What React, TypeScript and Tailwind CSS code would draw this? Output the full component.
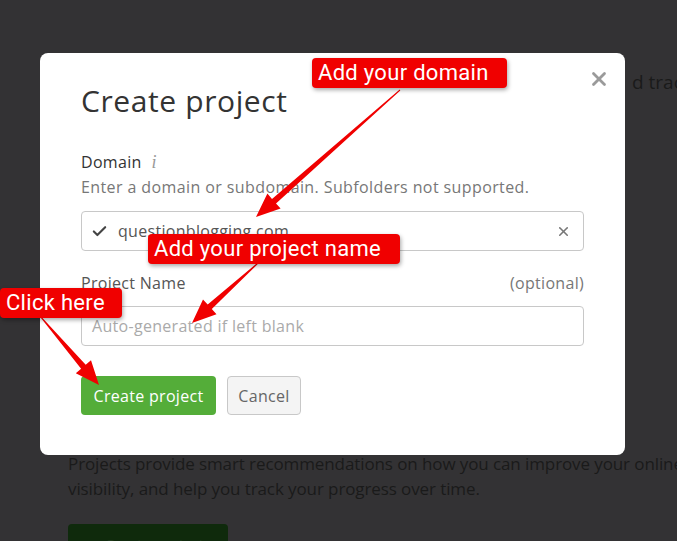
import { X, Check } from 'lucide-react'

const UI_FONT = "font-['Open_Sans',_'Noto_Sans',_sans-serif]"

type Pt = [number, number]

// tapered red arrow: thin tail, wide shaft near the head, triangle head
function arrowPoints(from: Pt, to: Pt, head = 24, headW = 20, w0 = 1, w1 = 6) {
  const [x1, y1] = from
  const [x2, y2] = to
  const len = Math.hypot(x2 - x1, y2 - y1)
  const ux = (x2 - x1) / len
  const uy = (y2 - y1) / len
  const nx = -uy
  const ny = ux
  const bx = x2 - ux * head
  const by = y2 - uy * head
  const pts: Pt[] = [
    [x1 + nx * w0 / 2, y1 + ny * w0 / 2],
    [bx + nx * w1 / 2, by + ny * w1 / 2],
    [bx + nx * headW / 2, by + ny * headW / 2],
    [x2, y2],
    [bx - nx * headW / 2, by - ny * headW / 2],
    [bx - nx * w1 / 2, by - ny * w1 / 2],
    [x1 - nx * w0 / 2, y1 - ny * w0 / 2],
  ]
  return pts.map((p) => p.map((v) => v.toFixed(1)).join(',')).join(' ')
}

const arrows: { from: Pt; to: Pt }[] = [
  { from: [400, 90], to: [256, 217] },
  { from: [258, 263], to: [192, 323] },
  { from: [40, 316], to: [99, 385] },
]

function Callout({ children, className }: { children: string; className: string }) {
  return (
    <div
      className={`absolute flex items-center rounded-[4px] bg-[#f00000] px-[6px] font-['Roboto',_'Liberation_Sans',_sans-serif] text-[22px] leading-none tracking-[0.3px] text-white shadow-[1px_2px_4px_rgba(0,0,0,0.35)] ${className}`}
    >
      {children}
    </div>
  )
}

export default function App() {
  return (
    <div className={`relative h-[541px] w-[677px] overflow-hidden bg-[#333234] ${UI_FONT}`}>
      {/* dimmed page behind the modal */}
      <div className="flex flex-col pl-[68px] text-[17px] text-[#1a1a1a]">
        <p className="ml-[564px] mt-[68px] whitespace-nowrap text-[19px] leading-[28px]">d track</p>
        <div className="mt-[355px] leading-[25px] tracking-[-0.1px]">
          <p className="whitespace-nowrap">Projects provide smart recommendations on how you can improve your online</p>
          <p className="whitespace-nowrap">visibility, and help you track your progress over time.</p>
        </div>
        <div className="mt-[23px] flex h-[40px] w-[160px] items-center justify-center rounded-[4px] bg-[#0f2a0c] text-[15px] text-[#203a1c]">
          + Create project
        </div>
      </div>

      {/* modal */}
      <div className="absolute left-[40px] top-[53px] h-[402px] w-[585px] rounded-[8px] bg-white px-[41px] pt-[28px] tracking-[0.3px]">
        <button type="button" className="absolute right-[15px] top-[15px] text-[#9a9a9a]">
          <X className="h-[22px] w-[22px]" strokeWidth={3} />
        </button>

        <h1 className="text-[30px] leading-[40px] tracking-[0.6px] text-[#333]">Create project</h1>

        <div className="mt-[30px] flex items-center gap-[10px] text-[16px] leading-[22px] text-[#333]">
          <span>Domain</span>
          <span className="font-['Liberation_Serif',_serif] text-[18px] italic text-[#999]">i</span>
        </div>
        <p className="mt-[3px] whitespace-nowrap text-[16px] leading-[22px] tracking-[0.4px] text-[#777]">
          Enter a domain or subdomain. Subfolders not supported.
        </p>

        <div className="mt-[13px] flex h-[40px] items-center rounded-[4px] border border-[#c8c8c8] pl-[9px] pr-[12px]">
          <Check className="h-[17px] w-[17px] text-[#444]" strokeWidth={3} />
          <span className="ml-[10px] flex-1 text-[16px] text-[#555]">questionblogging.com</span>
          <X className="h-[15px] w-[15px] text-[#777]" strokeWidth={2.5} />
        </div>

        <div className="mt-[21px] flex items-center justify-between text-[16px] leading-[22px]">
          <span className="text-[#555]">Project Name</span>
          <span className="text-[#777]">(optional)</span>
        </div>

        <div className="mt-[12px] flex h-[40px] items-center rounded-[4px] border border-[#c8c8c8] px-[10px]">
          <span className="text-[16px] text-[#aaa]">Auto-generated if left blank</span>
        </div>

        <div className="mt-[30px] flex gap-[11px]">
          <button
            type="button"
            className="h-[39px] w-[135px] rounded-[4px] bg-[#54ad39] text-[16px] tracking-[0.3px] text-white"
          >
            Create project
          </button>
          <button
            type="button"
            className="h-[39px] w-[74px] rounded-[4px] border border-[#c8c8c8] bg-[#f4f4f4] text-[16px] text-[#666]"
          >
            Cancel
          </button>
        </div>
      </div>

      {/* annotations */}
      <svg className="pointer-events-none absolute inset-0" width="677" height="541" viewBox="0 0 677 541">
        {arrows.map((a, i) => (
          <polygon key={i} points={arrowPoints(a.from, a.to)} fill="#f00000" />
        ))}
      </svg>
      <Callout className="left-[312px] top-[58px] h-[30px] w-[195px]">Add your domain</Callout>
      <Callout className="left-[148px] top-[234px] h-[30px] w-[252px]">Add your project name</Callout>
      <Callout className="left-0 top-[288px] h-[30px] w-[122px]">Click here</Callout>
    </div>
  )
}
